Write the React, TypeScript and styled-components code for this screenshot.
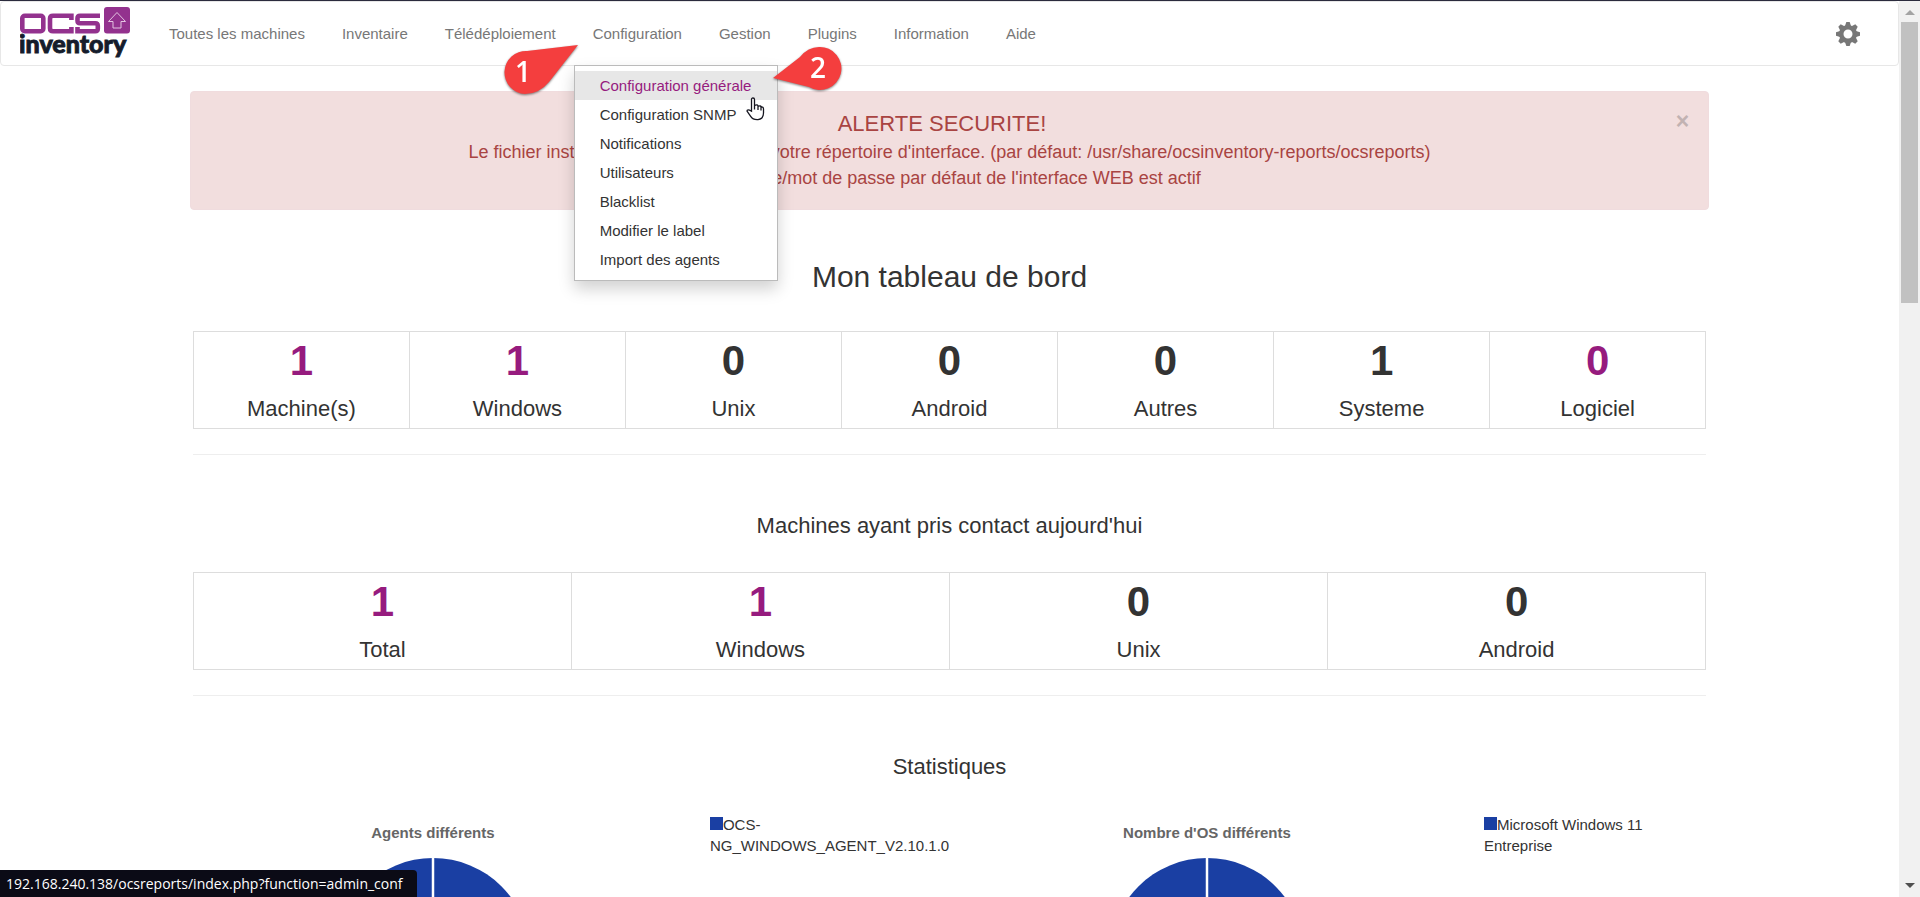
import React from "react";
import styled, { createGlobalStyle } from "styled-components";

const Global = createGlobalStyle`
  * { box-sizing: border-box; }
  body { margin: 0; background: #fff; color: #333; font: 15px/21px "Liberation Sans", Arial, sans-serif; }
  a { text-decoration: none; color: inherit; }
`;

const Window = styled.div`
  display: flex;
  height: 100vh;
  overflow: hidden;
  border-top: 1px solid #2b2b3d;
`;

const Page = styled.div`
  flex: 1;
  min-width: 0;
  overflow: hidden;
`;

const Navbar = styled.header`
  display: flex;
  align-items: center;
  height: 65px;
  padding: 0 38px 0 19px;
  border: 1px solid #e7e7e7;
  border-radius: 4px;
`;

const Brand = styled.a`
  display: flex;
  width: 131px;
  height: 54px;
`;

const Menu = styled.nav`
  display: flex;
  flex: 1;
`;

const MenuItem = styled.div`
  position: relative;
`;

const MenuLink = styled.a`
  display: block;
  padding: 21px 19px 21px 18px;
  color: #777;
`;

const Dropdown = styled.div`
  position: absolute;
  z-index: 2;
  top: 100%;
  left: -1px;
  width: 204px;
  padding: 5px 0 6px;
  background: #fff;
  border: 1px solid #bbb;
  box-shadow: 0 8px 15px rgba(0, 0, 0, 0.18);
`;

const DropdownLink = styled.a<{ $active?: boolean }>`
  display: block;
  padding: 4px 25px;
  color: ${(p) => (p.$active ? "#961b7e" : "#333")};
  background: ${(p) => (p.$active ? "#e7e7e7" : "transparent")};
`;

const Settings = styled.button`
  display: flex;
  padding: 0;
  border: 0;
  background: none;
  color: #777;
`;

const Container = styled.main`
  width: 80%;
  margin: 25px auto 0;
`;

const Alert = styled.section`
  position: relative;
  padding: 19px 45px 18px;
  text-align: center;
  color: #a94442;
  background: #f2dede;
  border: 1px solid #f0dcde;
  border-radius: 4px;
  font-size: 18px;
  line-height: 26px;
`;

const AlertTitle = styled.h2`
  margin: 0 15px 2px 0;
  font-size: 22px;
  font-weight: 400;
  line-height: 26px;
`;

const Close = styled.button`
  position: absolute;
  top: 18px;
  right: 19px;
  padding: 0;
  border: 0;
  background: none;
  color: #c2b2b2;
  font: bold 23px/23px "Liberation Sans", Arial, sans-serif;
`;

const Title = styled.h1`
  margin: 50px 0 37px;
  text-align: center;
  font-size: 30px;
  font-weight: 400;
  line-height: 34px;
`;

const Subtitle = styled.h2`
  margin: 57px 0 32px;
  text-align: center;
  font-size: 22px;
  font-weight: 400;
  line-height: 28px;
`;

const Counters = styled.div`
  display: flex;
  margin: 0 3px;
  border: 1px solid #ddd;
`;

const Counter = styled.div`
  flex: 1;
  height: 96px;
  padding-top: 6px;
  text-align: center;
  & + & { border-left: 1px solid #ddd; }
`;

const Value = styled.a<{ $linked?: boolean }>`
  display: block;
  font-size: 42px;
  font-weight: 700;
  line-height: 46px;
  color: ${(p) => (p.$linked ? "#961b7e" : "#333")};
`;

const Label = styled.div`
  margin-top: 12px;
  font-size: 22px;
  line-height: 26px;
`;

const Rule = styled.hr`
  margin: 25px 3px 0;
  border: 0;
  border-top: 1px solid #eee;
`;

const Charts = styled.div`
  display: grid;
  grid-template-columns: 1fr 1fr;
  gap: 32px;
  padding: 1px 0 0 3px;
`;

const Chart = styled.figure`
  display: grid;
  grid-template-columns: 480px 250px;
  margin: 0;
`;

const ChartTitle = styled.h3`
  margin: 0 0 15px;
  text-align: center;
  color: #666;
  font-size: 15px;
  line-height: 21px;
`;

const Plot = styled.div`
  padding-top: 8px;
  svg { display: block; margin: 0 auto; }
`;

const Legend = styled.figcaption`
  padding-left: 37px;
`;

const Swatch = styled.span`
  display: inline-block;
  width: 13px;
  height: 13px;
  background: #1a3fa3;
`;

const Scrollbar = styled.div`
  display: flex;
  flex-direction: column;
  align-items: center;
  justify-content: space-between;
  width: 21px;
  padding: 9px 0;
  background: #f1f1f1;
`;

const Thumb = styled.div`
  width: 17px;
  height: 281px;
  margin: 7px 0 auto;
  background: #c1c1c1;
`;

const Status = styled.div`
  position: absolute;
  bottom: 0;
  left: 0;
  padding: 4px 14px 3px 6px;
  border-radius: 0 4px 0 0;
  background: #0b0b16;
  color: #fff;
  font: 14px/20px "Open Sans", "Noto Sans", sans-serif;
`;

const Overlay = styled.svg<{ $x: number; $y: number }>`
  position: absolute;
  z-index: 3;
  left: ${(p) => p.$x}px;
  top: ${(p) => p.$y}px;
  overflow: visible;
  pointer-events: none;
`;

const Callout = styled(Overlay)`
  filter: drop-shadow(0 1px 1px rgba(0, 0, 0, 0.5));
`;

const links = ["Toutes les machines", "Inventaire", "Télédéploiement", "Configuration", "Gestion", "Plugins", "Information", "Aide"];
const configLinks = ["Configuration générale", "Configuration SNMP", "Notifications", "Utilisateurs", "Blacklist", "Modifier le label", "Import des agents"];

type Count = [label: string, value: number, linked?: boolean];
const machines: Count[] = [["Machine(s)", 1, true], ["Windows", 1, true], ["Unix", 0], ["Android", 0], ["Autres", 0], ["Systeme", 1], ["Logiciel", 0, true]];
const today: Count[] = [["Total", 1, true], ["Windows", 1, true], ["Unix", 0], ["Android", 0]];

const CounterRow = ({ items }: { items: Count[] }) => (
  <Counters>
    {items.map(([label, value, linked]) => (
      <Counter key={label}>
        <Value $linked={linked} href="#">{value}</Value>
        <Label>{label}</Label>
      </Counter>
    ))}
  </Counters>
);

const Pie = ({ title, legend }: { title: string; legend: string }) => (
  <Chart>
    <Plot>
      <ChartTitle>{title}</ChartTitle>
      <svg width="194" height="194" viewBox="0 0 194 194" aria-hidden="true">
        <circle cx="97" cy="97" r="97" fill="#1a3fa3" />
        <path d="M97 0V97" stroke="#fff" strokeWidth="2.5" />
      </svg>
    </Plot>
    <Legend><Swatch />{legend}</Legend>
  </Chart>
);

const Logo = () => (
  <svg width="112" height="54" viewBox="0 0 112 54" role="img" aria-label="OCS inventory">
    <g fill="none" stroke="#93328e" strokeWidth="4.6">
      <rect x="2.3" y="8.8" width="21" height="15.4" rx="2.5" />
      <path d="M51.4 13V8.8H33q-3 0-3 3v9.4q0 3 3 3h18.4V20" />
      <path d="M80 8.8H60q-2.5 0-2.5 2.5v2.4q0 2.5 2.5 2.5h15.3q2.5 0 2.5 2.5v3q0 2.5-2.5 2.5H57.5V20" />
    </g>
    <rect x="84" y="0" width="26" height="26.5" rx="3" fill="#93328e" />
    <path d="M97 5.500l8.500 9h-4.500v6.500h-8v-6.500h-4.500z" fill="none" stroke="#e3c4e1" />
    <text x="-1" y="46" fontFamily="Lato, sans-serif" fontSize="25" fontWeight="900" fill="#151c2c" stroke="#151c2c" strokeWidth="0.9">inventory</text>
  </svg>
);

const Gear = () => (
  <svg width="24" height="24" viewBox="-12 -12 24 24" aria-hidden="true">
    <circle r="6.8" fill="none" stroke="currentColor" strokeWidth="4.6" />
    {[0, 45, 90, 135, 180, 225, 270, 315].map((a) => (
      <path key={a} d="M-3-8L-1.700-12H1.700L3-8z" fill="currentColor" transform={`rotate(${a})`} />
    ))}
  </svg>
);

export default function App() {
  return (
    <>
      <Global />
      <Window>
        <Page>
          <Navbar>
            <Brand href="#"><Logo /></Brand>
            <Menu>
              {links.map((l) => (
                <MenuItem key={l}>
                  <MenuLink href="#">{l}</MenuLink>
                  {l === "Configuration" && (
                    <Dropdown>
                      {configLinks.map((c, i) => (
                        <DropdownLink key={c} href="#" $active={i === 0}>{c}</DropdownLink>
                      ))}
                    </Dropdown>
                  )}
                </MenuItem>
              ))}
            </Menu>
            <Settings aria-label="Paramètres"><Gear /></Settings>
          </Navbar>
          <Container>
            <Alert>
              <Close aria-label="Fermer">×</Close>
              <AlertTitle>ALERTE SECURITE!</AlertTitle>
              <div>Le fichier install.php est présent dans votre répertoire d'interface. (par défaut: /usr/share/ocsinventory-reports/ocsreports)</div>
              <div>Le compte/mot de passe par défaut de l'interface WEB est actif</div>
            </Alert>
            <Title>Mon tableau de bord</Title>
            <CounterRow items={machines} />
            <Rule />
            <Subtitle>Machines ayant pris contact aujourd'hui</Subtitle>
            <CounterRow items={today} />
            <Rule />
            <Subtitle>Statistiques</Subtitle>
            <Charts>
              <Pie title="Agents différents" legend="OCS-NG_WINDOWS_AGENT_V2.10.1.0" />
              <Pie title="Nombre d'OS différents" legend="Microsoft Windows 11 Entreprise" />
            </Charts>
          </Container>
        </Page>
        <Scrollbar>
          <svg width="10" height="5"><path d="M5 0L10 5H0z" fill="#a3a3a3" /></svg>
          <Thumb />
          <svg width="10" height="5"><path d="M0 0H10L5 5z" fill="#505050" /></svg>
        </Scrollbar>
      </Window>
      <Callout $x={503} $y={45} width="76" height="50">
        <path d="M75 0L46 37Q36 49 22 49A21.500 21.500 0 1 1 24 6z" fill="#f43e3e" />
        <text x="20" y="37" textAnchor="middle" fill="#fff" fontFamily="Open Sans, sans-serif" fontSize="28" fontWeight="600">1</text>
      </Callout>
      <Callout $x={773} $y={46} width="68" height="46">
        <path d="M0 32L27 11Q35 1 46 1A21.500 21.500 0 1 1 36 41z" fill="#f43e3e" />
        <text x="45" y="32" textAnchor="middle" fill="#fff" fontFamily="Open Sans, sans-serif" fontSize="28" fontWeight="600">2</text>
      </Callout>
      <Overlay $x={746} $y={97} width="18" height="24">
        <path d="M5.500 14V2.500q0-1.500 1.500-1.500t1.500 1.500v6q3.500-1.500 3.500.8 3-1 3 .8 2.500-.5 2.500 2v4q0 6-5.500 6.500-5 .4-7.500-3.500l-3.500-5q0-2.500 4.500 0zM8.500 8.500v4M12 9.500v3.500M15 10.500v3" fill="#fff" stroke="#15151f" strokeWidth="1.3" />
      </Overlay>
      <Status>192.168.240.138/ocsreports/index.php?function=admin_conf</Status>
    </>
  );
}
